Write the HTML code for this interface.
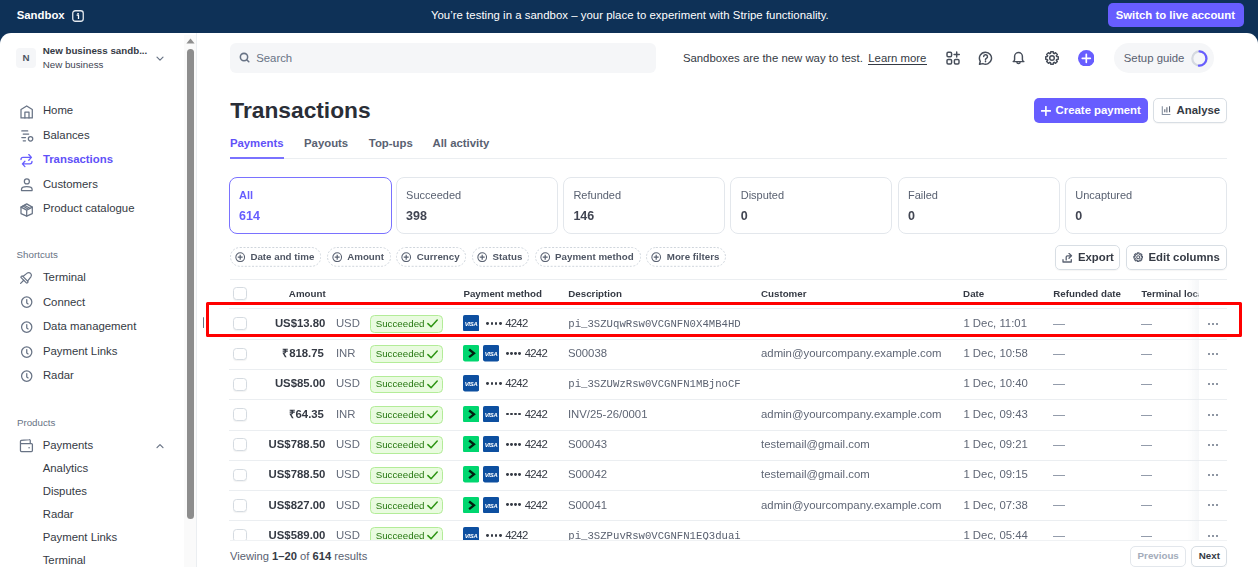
<!DOCTYPE html>
<html><head><meta charset="utf-8"><title>Transactions</title>
<style>
html,body{margin:0;padding:0;width:1258px;height:567px;overflow:hidden;background:#fff}
body{position:relative;font-family:"Liberation Sans",sans-serif}
.a{position:absolute;display:block}
.t{position:absolute;white-space:nowrap;display:block}
.gs{position:absolute;left:0;top:0;width:1258px;height:567px;will-change:transform}
</style></head><body>
<div class="a" style="left:0px;top:0px;width:1258px;height:567px;background:#0e3157"></div>
<span class="t" style="left:16.70px;top:10.02px;font-size:11.375px;line-height:11.375px;font-weight:700;color:#ffffff;font-family:'Liberation Sans',sans-serif;">Sandbox</span>
<svg class="a" style="left:72px;top:10px;" width="12" height="12" viewBox="0 0 12 12" fill="none"><rect x="0.75" y="0.75" width="10.5" height="10.5" rx="2.5" stroke="#e3e8ee" stroke-width="1.3"/><rect x="5.3" y="3" width="1.5" height="1.4" fill="#fff"/><path d="M4.6 5.2h1.9v3.9" stroke="#fff" stroke-width="1.3"/></svg>
<span class="t" style="left:430.90px;top:10.02px;font-size:11.375px;line-height:11.375px;font-weight:400;color:#ffffff;font-family:'Liberation Sans',sans-serif;letter-spacing:0.04px">You’re testing in a sandbox – your place to experiment with Stripe functionality.</span>
<div class="a" style="left:1108.4px;top:3.2px;width:135.5px;height:24.3px;background:#675dff;border-radius:5px"></div>
<span class="t" style="left:1115.70px;top:10.02px;font-size:11.375px;line-height:11.375px;font-weight:700;color:#ffffff;font-family:'Liberation Sans',sans-serif;">Switch to live account</span>
<div class="a" style="left:0px;top:33px;width:1258px;height:534px;background:#fff;border-radius:11px 11px 0 0"></div>
<div class="a" style="left:196px;top:33px;width:1px;height:534px;background:#ebeef1"></div>
<div class="a" style="left:16px;top:48px;width:20px;height:20px;background:#f5f6f8;border-radius:4px"></div>
<span class="t" style="left:22.50px;top:53.04px;font-size:9.75px;line-height:9.75px;font-weight:700;color:#4f5664;font-family:'Liberation Sans',sans-serif;">N</span>
<span class="t" style="left:42.70px;top:46.04px;font-size:9.75px;line-height:9.75px;font-weight:700;color:#353a44;font-family:'Liberation Sans',sans-serif;">New business sandb...</span>
<span class="t" style="left:42.70px;top:60.04px;font-size:9.75px;line-height:9.75px;font-weight:400;color:#414552;font-family:'Liberation Sans',sans-serif;">New business</span>
<svg class="a" style="left:156px;top:56px;" width="8" height="6" viewBox="0 0 8 6" fill="none"><path d="M1 1.2l3 3 3-3" stroke="#687385" stroke-width="1.2" stroke-linecap="round" stroke-linejoin="round"/></svg>
<span class="t" style="left:42.90px;top:105.02px;font-size:11.375px;line-height:11.375px;font-weight:400;color:#353a44;font-family:'Liberation Sans',sans-serif;">Home</span>
<span class="t" style="left:42.90px;top:130.02px;font-size:11.375px;line-height:11.375px;font-weight:400;color:#353a44;font-family:'Liberation Sans',sans-serif;">Balances</span>
<span class="t" style="left:42.90px;top:154.02px;font-size:11.375px;line-height:11.375px;font-weight:700;color:#5f51f8;font-family:'Liberation Sans',sans-serif;">Transactions</span>
<span class="t" style="left:42.90px;top:179.02px;font-size:11.375px;line-height:11.375px;font-weight:400;color:#353a44;font-family:'Liberation Sans',sans-serif;">Customers</span>
<span class="t" style="left:42.90px;top:203.02px;font-size:11.375px;line-height:11.375px;font-weight:400;color:#353a44;font-family:'Liberation Sans',sans-serif;">Product catalogue</span>
<svg class="a" style="left:19.5px;top:104.5px;" width="14" height="14" viewBox="0 0 14 14" fill="none"><path d="M1 12.9V4.6L6.7 0.9l5.6 3.7v8.3z" stroke="#687385" stroke-width="1.25" stroke-linecap="round" stroke-linejoin="round"/><path d="M4.9 12.9V7h4.1v5.9" stroke="#687385" stroke-width="1.25" stroke-linecap="round" stroke-linejoin="round"/></svg>
<svg class="a" style="left:19.5px;top:129px;" width="14" height="14" viewBox="0 0 14 14" fill="none"><path d="M1.8 1.9h5.9M3.2 5h5.5M1.8 8.5h3.7M3.2 11.8h2.3" stroke="#687385" stroke-width="1.25" stroke-linecap="round" stroke-linejoin="round"/><circle cx="10.55" cy="9.85" r="2.2" stroke="#687385" stroke-width="1.25" stroke-linecap="round" stroke-linejoin="round"/></svg>
<svg class="a" style="left:19.5px;top:154px;" width="14" height="14" viewBox="0 0 14 14" fill="none"><path d="M1 5.5Q1 3.4 3 3.4H11.2M8.8 0.5l2.6 2.9-2.6 2.8M12 7.3Q12 9.9 10 9.9H2.6M4.9 7.3L2.4 9.9l2.5 2.7" stroke="#675dff" stroke-width="1.3" stroke-linecap="round" stroke-linejoin="round"/></svg>
<svg class="a" style="left:19.5px;top:178px;" width="14" height="14" viewBox="0 0 14 14" fill="none"><circle cx="6.85" cy="3.4" r="2.5" stroke="#687385" stroke-width="1.25" stroke-linecap="round" stroke-linejoin="round"/><path d="M1.5 12.55v-1.3c0-1.7 1.4-2.7 5.3-2.7s5.3 1 5.3 2.7v1.3z" stroke="#687385" stroke-width="1.25" stroke-linecap="round" stroke-linejoin="round"/></svg>
<svg class="a" style="left:19.5px;top:202.5px;" width="14" height="14" viewBox="0 0 14 14" fill="none"><path d="M6.7 0.9l5.6 3.2v6.5l-5.6 2.5L1 10.6V4.1z" stroke="#687385" stroke-width="1.25" stroke-linecap="round" stroke-linejoin="round"/><path d="M1 4.1l5.7 3 5.6-3M6.7 7.1v6M2.9 3l5.5 3.2M4.4 2.2l5.5 3.1" stroke="#687385" stroke-width="1.25" stroke-linecap="round" stroke-linejoin="round"/></svg>
<span class="t" style="left:16.60px;top:250.04px;font-size:9.75px;line-height:9.75px;font-weight:400;color:#687385;font-family:'Liberation Sans',sans-serif;">Shortcuts</span>
<span class="t" style="left:42.90px;top:272.02px;font-size:11.375px;line-height:11.375px;font-weight:400;color:#353a44;font-family:'Liberation Sans',sans-serif;">Terminal</span>
<span class="t" style="left:42.90px;top:297.02px;font-size:11.375px;line-height:11.375px;font-weight:400;color:#353a44;font-family:'Liberation Sans',sans-serif;">Connect</span>
<span class="t" style="left:42.90px;top:321.02px;font-size:11.375px;line-height:11.375px;font-weight:400;color:#353a44;font-family:'Liberation Sans',sans-serif;">Data management</span>
<span class="t" style="left:42.90px;top:346.02px;font-size:11.375px;line-height:11.375px;font-weight:400;color:#353a44;font-family:'Liberation Sans',sans-serif;">Payment Links</span>
<span class="t" style="left:42.90px;top:370.02px;font-size:11.375px;line-height:11.375px;font-weight:400;color:#353a44;font-family:'Liberation Sans',sans-serif;">Radar</span>
<svg class="a" style="left:16.05px;top:268.35px;" width="20" height="20" viewBox="0 0 20 20" fill="none"><g transform="rotate(45 10 10)"><path d="M10 17.6V13.2" stroke="#687385" stroke-width="1.25" stroke-linecap="round" stroke-linejoin="round"/><rect x="5.6" y="11.1" width="8.8" height="2.1" rx=".7" stroke="#687385" stroke-width="1.25" stroke-linecap="round" stroke-linejoin="round"/><path d="M6.7 11.1l.7-5.4c.2-1.3 1.3-2.2 2.6-2.2s2.4.9 2.6 2.2l.7 5.4" stroke="#687385" stroke-width="1.25" stroke-linecap="round" stroke-linejoin="round"/></g></svg>
<svg class="a" style="left:19.5px;top:295.40000000000003px;" width="14" height="14" viewBox="0 0 14 14" fill="none"><circle cx="6.7" cy="7.1" r="5.15" stroke="#687385" stroke-width="1.25" stroke-linecap="round" stroke-linejoin="round"/><path d="M6.75 4.5V7.9l1.35 1" stroke="#687385" stroke-width="1.25" stroke-linecap="round" stroke-linejoin="round"/></svg>
<svg class="a" style="left:19.5px;top:319.8px;" width="14" height="14" viewBox="0 0 14 14" fill="none"><circle cx="6.7" cy="7.1" r="5.15" stroke="#687385" stroke-width="1.25" stroke-linecap="round" stroke-linejoin="round"/><path d="M6.75 4.5V7.9l1.35 1" stroke="#687385" stroke-width="1.25" stroke-linecap="round" stroke-linejoin="round"/></svg>
<svg class="a" style="left:19.5px;top:344.5px;" width="14" height="14" viewBox="0 0 14 14" fill="none"><circle cx="6.7" cy="7.1" r="5.15" stroke="#687385" stroke-width="1.25" stroke-linecap="round" stroke-linejoin="round"/><path d="M6.75 4.5V7.9l1.35 1" stroke="#687385" stroke-width="1.25" stroke-linecap="round" stroke-linejoin="round"/></svg>
<svg class="a" style="left:19.5px;top:369.0px;" width="14" height="14" viewBox="0 0 14 14" fill="none"><circle cx="6.7" cy="7.1" r="5.15" stroke="#687385" stroke-width="1.25" stroke-linecap="round" stroke-linejoin="round"/><path d="M6.75 4.5V7.9l1.35 1" stroke="#687385" stroke-width="1.25" stroke-linecap="round" stroke-linejoin="round"/></svg>
<span class="t" style="left:16.90px;top:418.04px;font-size:9.75px;line-height:9.75px;font-weight:400;color:#687385;font-family:'Liberation Sans',sans-serif;">Products</span>
<span class="t" style="left:42.70px;top:440.02px;font-size:11.375px;line-height:11.375px;font-weight:400;color:#353a44;font-family:'Liberation Sans',sans-serif;">Payments</span>
<svg class="a" style="left:19px;top:438px;" width="15" height="15" viewBox="0 0 15 15" fill="none"><path d="M1.45 5.6H12.4a1 1 0 0 1 1 1v5.95a1 1 0 0 1-1 1H2.45a1 1 0 0 1-1-1V3.4c0-.5.35-.9.85-1L10.3 1.7c.5-.1.95.3.95.8v3.1" stroke="#687385" stroke-width="1.25" stroke-linecap="round" stroke-linejoin="round"/><circle cx="10.1" cy="9.7" r=".8" fill="#687385"/></svg>
<svg class="a" style="left:156px;top:443px;" width="8" height="6" viewBox="0 0 8 6" fill="none"><path d="M1 4.6l3-3 3 3" stroke="#687385" stroke-width="1.2" stroke-linecap="round" stroke-linejoin="round"/></svg>
<span class="t" style="left:42.70px;top:463.02px;font-size:11.375px;line-height:11.375px;font-weight:400;color:#353a44;font-family:'Liberation Sans',sans-serif;">Analytics</span>
<span class="t" style="left:42.70px;top:486.02px;font-size:11.375px;line-height:11.375px;font-weight:400;color:#353a44;font-family:'Liberation Sans',sans-serif;">Disputes</span>
<span class="t" style="left:42.70px;top:509.02px;font-size:11.375px;line-height:11.375px;font-weight:400;color:#353a44;font-family:'Liberation Sans',sans-serif;">Radar</span>
<span class="t" style="left:42.70px;top:532.02px;font-size:11.375px;line-height:11.375px;font-weight:400;color:#353a44;font-family:'Liberation Sans',sans-serif;">Payment Links</span>
<span class="t" style="left:42.70px;top:555.02px;font-size:11.375px;line-height:11.375px;font-weight:400;color:#353a44;font-family:'Liberation Sans',sans-serif;">Terminal</span>
<div class="a" style="left:184.4px;top:35.3px;width:11.8px;height:531.7px;background:#fafafa"></div>
<svg class="a" style="left:186px;top:38px;" width="9" height="6" viewBox="0 0 9 6" fill="none"><path d="M4.5 0.6L8.6 5.4H0.4z" fill="#8f8f8f"/></svg>
<div class="a" style="left:187px;top:48.5px;width:7px;height:470.5px;background:#8d8d8d;border-radius:3.5px"></div>
<div class="a" style="left:229.5px;top:42.9px;width:426.5px;height:30px;background:#f5f6f8;border-radius:6px"></div>
<svg class="a" style="left:238.5px;top:51.5px;" width="12" height="12" viewBox="0 0 12 12" fill="none"><circle cx="5" cy="5" r="3.65" stroke="#687385" stroke-width="1.55"/><path d="M7.7 7.7l2.1 2.1" stroke="#687385" stroke-width="1.55" stroke-linecap="round"/></svg>
<span class="t" style="left:256.20px;top:53.02px;font-size:11.375px;line-height:11.375px;font-weight:400;color:#687385;font-family:'Liberation Sans',sans-serif;">Search</span>
<span class="t" style="left:682.90px;top:53.02px;font-size:11.375px;line-height:11.375px;font-weight:400;color:#353a44;font-family:'Liberation Sans',sans-serif;">Sandboxes are the new way to test.</span>
<span class="t" style="left:868.30px;top:53.02px;font-size:11.375px;line-height:11.375px;font-weight:400;color:#353a44;font-family:'Liberation Sans',sans-serif;">Learn more</span>
<div class="a" style="left:868px;top:64px;width:58.9px;height:1.2px;background:#353a44"></div>
<svg class="a" style="left:945.5px;top:51.4px;" width="15" height="14" viewBox="0 0 15 14" fill="none"><rect x="1" y="1.2" width="4.6" height="4.6" rx="1.2" stroke="#474e5a" stroke-width="1.45" stroke-linecap="round" stroke-linejoin="round"/><rect x="1" y="8.4" width="4.6" height="4.6" rx="1.2" stroke="#474e5a" stroke-width="1.45" stroke-linecap="round" stroke-linejoin="round"/><rect x="8.4" y="8.4" width="4.6" height="4.6" rx="1.2" stroke="#474e5a" stroke-width="1.45" stroke-linecap="round" stroke-linejoin="round"/><path d="M10.7 0.9v5.2M8.1 3.5h5.2" stroke="#474e5a" stroke-width="1.45" stroke-linecap="round" stroke-linejoin="round"/></svg>
<svg class="a" style="left:978px;top:50.9px;" width="15" height="14.5" viewBox="0 0 15 14.5" fill="none"><path d="M7.5 1.2a6 6 0 1 1-2.6 11.4L1.5 13.3l.8-3A6 6 0 0 1 7.5 1.2z" stroke="#474e5a" stroke-width="1.45" stroke-linecap="round" stroke-linejoin="round"/><path d="M5.7 5.6a1.9 1.9 0 1 1 2.7 1.7c-.6.3-.9.7-.9 1.3v.3" stroke="#474e5a" stroke-width="1.45" stroke-linecap="round" stroke-linejoin="round"/><circle cx="7.5" cy="10.6" r=".8" fill="#474e5a"/></svg>
<svg class="a" style="left:1012px;top:51px;" width="13" height="14.5" viewBox="0 0 13 14.5" fill="none"><path d="M1.2 10.6c.9-.5 1.4-1.2 1.4-2.2V5.4a3.9 3.9 0 0 1 7.8 0v3c0 1 .5 1.7 1.4 2.2z" stroke="#474e5a" stroke-width="1.45" stroke-linecap="round" stroke-linejoin="round"/><path d="M4.9 10.9a1.6 1.6 0 0 0 3.2 0" stroke="#474e5a" stroke-width="1.45" stroke-linecap="round" stroke-linejoin="round"/></svg>
<svg class="a" style="left:1044.5px;top:51.3px;" width="14" height="14" viewBox="0 0 14 14" fill="none"><path d="M5.55 2.32 L5.73 0.73 L8.27 0.73 L8.45 2.32 L9.29 2.67 L10.54 1.67 L12.33 3.46 L11.33 4.71 L11.68 5.55 L13.27 5.73 L13.27 8.27 L11.68 8.45 L11.33 9.29 L12.33 10.54 L10.54 12.33 L9.29 11.33 L8.45 11.68 L8.27 13.27 L5.73 13.27 L5.55 11.68 L4.71 11.33 L3.46 12.33 L1.67 10.54 L2.67 9.29 L2.32 8.45 L0.73 8.27 L0.73 5.73 L2.32 5.55 L2.67 4.71 L1.67 3.46 L3.46 1.67 L4.71 2.67Z" stroke="#474e5a" stroke-width="1.45" stroke-linecap="round" stroke-linejoin="round"/><circle cx="7" cy="7" r="2.3" stroke="#474e5a" stroke-width="1.45" stroke-linecap="round" stroke-linejoin="round"/></svg>
<svg class="a" style="left:1077.5px;top:49.8px;" width="16.6" height="16.6" viewBox="0 0 16.6 16.6" fill="none"><circle cx="8.3" cy="8.3" r="8.3" fill="#675dff"/><path d="M8.3 4.3v8M4.3 8.3h8" stroke="#fff" stroke-width="1.7" stroke-linecap="round"/></svg>
<div class="a" style="left:1113.8px;top:43.4px;width:100px;height:29.4px;background:#f5f6f8;border-radius:15px"></div>
<span class="t" style="left:1123.80px;top:53.02px;font-size:11.375px;line-height:11.375px;font-weight:400;color:#596171;font-family:'Liberation Sans',sans-serif;">Setup guide</span>
<svg class="a" style="left:1191px;top:50.3px;" width="17" height="17" viewBox="0 0 17 17" fill="none"><circle cx="8.5" cy="8.5" r="7.2" stroke="#d5d9e0" stroke-width="2.2"/><path d="M8.5 1.3a7.2 7.2 0 0 1 -.6 14.4" stroke="#675dff" stroke-width="2.2" stroke-linecap="round"/></svg>
<span class="t" style="left:230.30px;top:99.04px;font-size:22.75px;line-height:22.75px;font-weight:700;color:#2a2e37;font-family:'Liberation Sans',sans-serif;">Transactions</span>
<div class="a" style="left:1033.7px;top:98px;width:114.8px;height:24.9px;background:#675dff;border-radius:5px"></div>
<svg class="a" style="left:1041px;top:105.6px;" width="10" height="10" viewBox="0 0 10 10" fill="none"><path d="M4.9 0.6v8.8M0.6 4.9h8.8" stroke="#fff" stroke-width="1.6" stroke-linecap="round"/></svg>
<span class="t" style="left:1055.60px;top:105.02px;font-size:11.375px;line-height:11.375px;font-weight:700;color:#ffffff;font-family:'Liberation Sans',sans-serif;">Create payment</span>
<div class="a" style="left:1153.4px;top:97.8px;width:73.6px;height:24.8px;box-sizing:border-box;border:1px solid #d8dee4;border-radius:5px;background:#fff;box-shadow:0 1px 1px rgba(0,0,0,.04)"></div>
<svg class="a" style="left:1160.5px;top:106px;" width="10" height="10" viewBox="0 0 10 10" fill="none"><path d="M1.3 0.2V8.5H9.4" stroke="#8792a2" stroke-width="1.1"/><path d="M3.8 3.3V6.2M5.9 1.2V6.6M8.55 0.2V6.3" stroke="#596171" stroke-width="1.05"/></svg>
<span class="t" style="left:1176.60px;top:105.02px;font-size:11.375px;line-height:11.375px;font-weight:700;color:#353a44;font-family:'Liberation Sans',sans-serif;">Analyse</span>
<div class="a" style="left:229.5px;top:158px;width:997.5px;height:1px;background:#ebeef1"></div>
<div class="a" style="left:229.5px;top:157px;width:54.6px;height:2px;background:#7a72ff"></div>
<span class="t" style="left:229.90px;top:138.02px;font-size:11.375px;line-height:11.375px;font-weight:700;color:#5f51f8;font-family:'Liberation Sans',sans-serif;">Payments</span>
<span class="t" style="left:304.00px;top:138.02px;font-size:11.375px;line-height:11.375px;font-weight:700;color:#596171;font-family:'Liberation Sans',sans-serif;">Payouts</span>
<span class="t" style="left:368.80px;top:138.02px;font-size:11.375px;line-height:11.375px;font-weight:700;color:#596171;font-family:'Liberation Sans',sans-serif;">Top-ups</span>
<span class="t" style="left:432.50px;top:138.02px;font-size:11.375px;line-height:11.375px;font-weight:700;color:#596171;font-family:'Liberation Sans',sans-serif;">All activity</span>
<div class="gs"><div class="a" style="left:228.5px;top:177.2px;width:163px;height:56.4px;box-sizing:border-box;border:1.8px solid #7a72ff;border-radius:8px"></div>
<span class="t" style="left:239.10px;top:190.04px;font-size:11px;line-height:11px;font-weight:700;color:#675dff;font-family:'Liberation Sans',sans-serif;">All</span>
<span class="t" style="left:239.10px;top:210.02px;font-size:12.5px;line-height:12.5px;font-weight:700;color:#675dff;font-family:'Liberation Sans',sans-serif;">614</span>
<div class="a" style="left:395.8px;top:177.2px;width:162px;height:56.4px;box-sizing:border-box;border:1px solid #e3e7ec;border-radius:8px"></div>
<span class="t" style="left:406.10px;top:190.04px;font-size:11px;line-height:11px;font-weight:400;color:#596171;font-family:'Liberation Sans',sans-serif;">Succeeded</span>
<span class="t" style="left:406.10px;top:210.02px;font-size:12.5px;line-height:12.5px;font-weight:700;color:#414552;font-family:'Liberation Sans',sans-serif;">398</span>
<div class="a" style="left:563.1px;top:177.2px;width:162px;height:56.4px;box-sizing:border-box;border:1px solid #e3e7ec;border-radius:8px"></div>
<span class="t" style="left:573.40px;top:190.04px;font-size:11px;line-height:11px;font-weight:400;color:#596171;font-family:'Liberation Sans',sans-serif;">Refunded</span>
<span class="t" style="left:573.40px;top:210.02px;font-size:12.5px;line-height:12.5px;font-weight:700;color:#414552;font-family:'Liberation Sans',sans-serif;">146</span>
<div class="a" style="left:730.4000000000001px;top:177.2px;width:162px;height:56.4px;box-sizing:border-box;border:1px solid #e3e7ec;border-radius:8px"></div>
<span class="t" style="left:740.70px;top:190.04px;font-size:11px;line-height:11px;font-weight:400;color:#596171;font-family:'Liberation Sans',sans-serif;">Disputed</span>
<span class="t" style="left:740.70px;top:210.02px;font-size:12.5px;line-height:12.5px;font-weight:700;color:#414552;font-family:'Liberation Sans',sans-serif;">0</span>
<div class="a" style="left:897.7px;top:177.2px;width:162px;height:56.4px;box-sizing:border-box;border:1px solid #e3e7ec;border-radius:8px"></div>
<span class="t" style="left:908.00px;top:190.04px;font-size:11px;line-height:11px;font-weight:400;color:#596171;font-family:'Liberation Sans',sans-serif;">Failed</span>
<span class="t" style="left:908.00px;top:210.02px;font-size:12.5px;line-height:12.5px;font-weight:700;color:#414552;font-family:'Liberation Sans',sans-serif;">0</span>
<div class="a" style="left:1065.0px;top:177.2px;width:162px;height:56.4px;box-sizing:border-box;border:1px solid #e3e7ec;border-radius:8px"></div>
<span class="t" style="left:1075.30px;top:190.04px;font-size:11px;line-height:11px;font-weight:400;color:#596171;font-family:'Liberation Sans',sans-serif;">Uncaptured</span>
<span class="t" style="left:1075.30px;top:210.02px;font-size:12.5px;line-height:12.5px;font-weight:700;color:#414552;font-family:'Liberation Sans',sans-serif;">0</span></div>
<svg class="a" style="left:230px;top:247px;" width="91.39999999999998" height="19.8" viewBox="0 0 91.39999999999998 19.8" fill="none"><rect x="0.5" y="0.5" width="90.4" height="18.8" rx="9.4" stroke="#cfd5dc" stroke-width="1" stroke-dasharray="2 1.6"/></svg>
<svg class="a" style="left:235.0px;top:252.05px;" width="10.4" height="10.4" viewBox="0 0 10.4 10.4" fill="none"><circle cx="5.2" cy="5.2" r="4.35" stroke="#596171" stroke-width="1.05"/><path d="M5.2 2.75v4.9M2.75 5.2h4.9" stroke="#596171" stroke-width="1.2"/></svg>
<span class="t" style="left:250.40px;top:252.04px;font-size:9.75px;line-height:9.75px;font-weight:700;color:#4f5664;font-family:'Liberation Sans',sans-serif;">Date and time</span>
<svg class="a" style="left:326.8px;top:247px;" width="64.19999999999999" height="19.8" viewBox="0 0 64.19999999999999 19.8" fill="none"><rect x="0.5" y="0.5" width="63.2" height="18.8" rx="9.4" stroke="#cfd5dc" stroke-width="1" stroke-dasharray="2 1.6"/></svg>
<svg class="a" style="left:331.8px;top:252.05px;" width="10.4" height="10.4" viewBox="0 0 10.4 10.4" fill="none"><circle cx="5.2" cy="5.2" r="4.35" stroke="#596171" stroke-width="1.05"/><path d="M5.2 2.75v4.9M2.75 5.2h4.9" stroke="#596171" stroke-width="1.2"/></svg>
<span class="t" style="left:347.20px;top:252.04px;font-size:9.75px;line-height:9.75px;font-weight:700;color:#4f5664;font-family:'Liberation Sans',sans-serif;">Amount</span>
<svg class="a" style="left:396.3px;top:247px;" width="70.19999999999999" height="19.8" viewBox="0 0 70.19999999999999 19.8" fill="none"><rect x="0.5" y="0.5" width="69.2" height="18.8" rx="9.4" stroke="#cfd5dc" stroke-width="1" stroke-dasharray="2 1.6"/></svg>
<svg class="a" style="left:401.40000000000003px;top:252.05px;" width="10.4" height="10.4" viewBox="0 0 10.4 10.4" fill="none"><circle cx="5.2" cy="5.2" r="4.35" stroke="#596171" stroke-width="1.05"/><path d="M5.2 2.75v4.9M2.75 5.2h4.9" stroke="#596171" stroke-width="1.2"/></svg>
<span class="t" style="left:416.80px;top:252.04px;font-size:9.75px;line-height:9.75px;font-weight:700;color:#4f5664;font-family:'Liberation Sans',sans-serif;">Currency</span>
<svg class="a" style="left:471.9px;top:247px;" width="57.10000000000002" height="19.8" viewBox="0 0 57.10000000000002 19.8" fill="none"><rect x="0.5" y="0.5" width="56.1" height="18.8" rx="9.4" stroke="#cfd5dc" stroke-width="1" stroke-dasharray="2 1.6"/></svg>
<svg class="a" style="left:477.1px;top:252.05px;" width="10.4" height="10.4" viewBox="0 0 10.4 10.4" fill="none"><circle cx="5.2" cy="5.2" r="4.35" stroke="#596171" stroke-width="1.05"/><path d="M5.2 2.75v4.9M2.75 5.2h4.9" stroke="#596171" stroke-width="1.2"/></svg>
<span class="t" style="left:492.50px;top:252.04px;font-size:9.75px;line-height:9.75px;font-weight:700;color:#4f5664;font-family:'Liberation Sans',sans-serif;">Status</span>
<svg class="a" style="left:534.8px;top:247px;" width="106.20000000000005" height="19.8" viewBox="0 0 106.20000000000005 19.8" fill="none"><rect x="0.5" y="0.5" width="105.2" height="18.8" rx="9.4" stroke="#cfd5dc" stroke-width="1" stroke-dasharray="2 1.6"/></svg>
<svg class="a" style="left:539.7px;top:252.05px;" width="10.4" height="10.4" viewBox="0 0 10.4 10.4" fill="none"><circle cx="5.2" cy="5.2" r="4.35" stroke="#596171" stroke-width="1.05"/><path d="M5.2 2.75v4.9M2.75 5.2h4.9" stroke="#596171" stroke-width="1.2"/></svg>
<span class="t" style="left:555.10px;top:252.04px;font-size:9.75px;line-height:9.75px;font-weight:700;color:#4f5664;font-family:'Liberation Sans',sans-serif;">Payment method</span>
<svg class="a" style="left:646.4px;top:247px;" width="80.0" height="19.8" viewBox="0 0 80.0 19.8" fill="none"><rect x="0.5" y="0.5" width="79.0" height="18.8" rx="9.4" stroke="#cfd5dc" stroke-width="1" stroke-dasharray="2 1.6"/></svg>
<svg class="a" style="left:651.4px;top:252.05px;" width="10.4" height="10.4" viewBox="0 0 10.4 10.4" fill="none"><circle cx="5.2" cy="5.2" r="4.35" stroke="#596171" stroke-width="1.05"/><path d="M5.2 2.75v4.9M2.75 5.2h4.9" stroke="#596171" stroke-width="1.2"/></svg>
<span class="t" style="left:666.80px;top:252.04px;font-size:9.75px;line-height:9.75px;font-weight:700;color:#4f5664;font-family:'Liberation Sans',sans-serif;">More filters</span>
<div class="a" style="left:1055.3px;top:245.3px;width:65.2px;height:24.7px;box-sizing:border-box;border:1px solid #d8dee4;border-radius:5px;box-shadow:0 1px 1px rgba(0,0,0,.04)"></div>
<svg class="a" style="left:1062.3px;top:252.6px;" width="11" height="10.5" viewBox="0 0 11 10.5" fill="none"><path d="M1 6.7V9h8.3V6.7M4.2 6.9V4a1.2 1.2 0 0 1 1.2-1.2H9.2M7 .4l2.5 2.4L7 5.2" stroke="#596171" stroke-width="1.3" stroke-linecap="round" stroke-linejoin="round"/></svg>
<span class="t" style="left:1077.90px;top:252.02px;font-size:11.375px;line-height:11.375px;font-weight:700;color:#353a44;font-family:'Liberation Sans',sans-serif;">Export</span>
<div class="a" style="left:1126.3px;top:245.3px;width:100.3px;height:24.7px;box-sizing:border-box;border:1px solid #d8dee4;border-radius:5px;box-shadow:0 1px 1px rgba(0,0,0,.04)"></div>
<svg class="a" style="left:1132.95px;top:251.9px;" width="10.4" height="10.4" viewBox="0 0 10.4 10.4" fill="none"><path d="M4.35 2.01 L4.37 0.88 L6.03 0.88 L6.05 2.01 L6.86 2.35 L7.67 1.56 L8.84 2.73 L8.05 3.54 L8.39 4.35 L9.52 4.37 L9.52 6.03 L8.39 6.05 L8.05 6.86 L8.84 7.67 L7.67 8.84 L6.86 8.05 L6.05 8.39 L6.03 9.52 L4.37 9.52 L4.35 8.39 L3.54 8.05 L2.73 8.84 L1.56 7.67 L2.35 6.86 L2.01 6.05 L0.88 6.03 L0.88 4.37 L2.01 4.35 L2.35 3.54 L1.56 2.73 L2.73 1.56 L3.54 2.35Z" stroke="#596171" stroke-width="1.2" stroke-linejoin="round"/><circle cx="5.2" cy="5.2" r="1.5" stroke="#596171" stroke-width="1.1"/></svg>
<span class="t" style="left:1148.50px;top:252.02px;font-size:11.375px;line-height:11.375px;font-weight:700;color:#353a44;font-family:'Liberation Sans',sans-serif;">Edit columns</span>
<div class="a" style="left:230px;top:279.3px;width:997px;height:1px;background:#ebeef1"></div>
<div class="a" style="left:233.3px;top:287.2px;width:13.3px;height:12.8px;box-sizing:border-box;border:1px solid #d5dbe1;border-radius:3.5px;background:#fff;box-shadow:0 1px 1px rgba(0,0,0,.05)"></div>
<span class="t" style="left:288.87px;top:289.04px;font-size:9.75px;line-height:9.75px;font-weight:700;color:#353a44;font-family:'Liberation Sans',sans-serif;">Amount</span>
<span class="t" style="left:463.40px;top:289.04px;font-size:9.75px;line-height:9.75px;font-weight:700;color:#353a44;font-family:'Liberation Sans',sans-serif;">Payment method</span>
<span class="t" style="left:568.30px;top:289.04px;font-size:9.75px;line-height:9.75px;font-weight:700;color:#353a44;font-family:'Liberation Sans',sans-serif;">Description</span>
<span class="t" style="left:761.00px;top:289.04px;font-size:9.75px;line-height:9.75px;font-weight:700;color:#353a44;font-family:'Liberation Sans',sans-serif;">Customer</span>
<span class="t" style="left:963.10px;top:289.04px;font-size:9.75px;line-height:9.75px;font-weight:700;color:#353a44;font-family:'Liberation Sans',sans-serif;">Date</span>
<span class="t" style="left:1053.30px;top:289.04px;font-size:9.75px;line-height:9.75px;font-weight:700;color:#353a44;font-family:'Liberation Sans',sans-serif;">Refunded date</span>
<span class="t" style="left:1141.30px;top:289.04px;font-size:9.75px;line-height:9.75px;font-weight:700;color:#353a44;font-family:'Liberation Sans',sans-serif;clip-path:inset(0 calc(100% - 58.5px) 0 0)">Terminal location</span>
<div class="gs"><div class="a" style="left:229.4px;top:308.4px;width:997px;height:1px;background:#ebeef1"></div>
<div class="a" style="left:233.3px;top:317.24499999999995px;width:13.3px;height:12.8px;box-sizing:border-box;border:1px solid #d5dbe1;border-radius:3.5px;background:#fff;box-shadow:0 1px 1px rgba(0,0,0,.05)"></div>
<span class="t" style="left:274.90px;top:318.02px;font-size:11.375px;line-height:11.375px;font-weight:700;color:#353a44;font-family:'Liberation Sans',sans-serif;">US$13.80</span>
<span class="t" style="left:335.90px;top:318.02px;font-size:11.375px;line-height:11.375px;font-weight:400;color:#646b7a;font-family:'Liberation Sans',sans-serif;">USD</span>
<div class="a" style="left:369.9px;top:315.145px;width:73.6px;height:17.6px;box-sizing:border-box;background:#e9fbdf;border:1px solid #b3ec98;border-radius:4.5px"></div>
<span class="t" style="left:375.70px;top:319.04px;font-size:9.75px;line-height:9.75px;font-weight:400;color:#25770f;font-family:'Liberation Sans',sans-serif;">Succeeded</span>
<svg class="a" style="left:427.2px;top:319.24499999999995px;" width="11" height="9" viewBox="0 0 11 9" fill="none"><path d="M0.9 4.6l3.2 3.2L10.2 1" stroke="#2e9413" stroke-width="1.5" stroke-linecap="round" stroke-linejoin="round"/></svg>
<svg class="a" style="left:462.9px;top:314.84499999999997px;" width="16.2" height="16.4" viewBox="0 0 16.2 16.4" fill="none"><rect width="16.2" height="16.4" rx="1.8" fill="#0d4fa0"/><text x="8.1" y="10.6" text-anchor="middle" font-family="Liberation Sans" font-weight="700" font-style="italic" font-size="5.9" letter-spacing="-0.2" fill="#fff">VISA</text></svg>
<div class="a" style="left:486.4px;top:321.69499999999994px;width:2.9px;height:2.9px;background:#353a44;border-radius:50%"></div>
<div class="a" style="left:490.5px;top:321.69499999999994px;width:2.9px;height:2.9px;background:#353a44;border-radius:50%"></div>
<div class="a" style="left:494.59999999999997px;top:321.69499999999994px;width:2.9px;height:2.9px;background:#353a44;border-radius:50%"></div>
<div class="a" style="left:498.7px;top:321.69499999999994px;width:2.9px;height:2.9px;background:#353a44;border-radius:50%"></div>
<span class="t" style="left:505.20px;top:318.02px;font-size:11.375px;line-height:11.375px;font-weight:400;color:#353a44;font-family:'Liberation Sans',sans-serif;letter-spacing:-0.75px">4242</span>
<span class="t" style="left:568.30px;top:319.04px;font-size:10.65px;line-height:10.65px;font-weight:400;color:#5a6170;font-family:'Liberation Mono',monospace;">pi_3SZUqwRsw0VCGNFN0X4MB4HD</span>
<span class="t" style="left:963.40px;top:318.02px;font-size:11.375px;line-height:11.375px;font-weight:400;color:#5f6675;font-family:'Liberation Sans',sans-serif;">1 Dec, 11:01</span>
<div class="a" style="left:1053.3px;top:323.74499999999995px;width:11.3px;height:1px;background:#939cab"></div>
<div class="a" style="left:1141.3px;top:323.74499999999995px;width:11.1px;height:1px;background:#939cab"></div>
<div class="a" style="left:229.4px;top:338.69px;width:997px;height:1px;background:#ebeef1"></div>
<div class="a" style="left:233.3px;top:347.53499999999997px;width:13.3px;height:12.8px;box-sizing:border-box;border:1px solid #d5dbe1;border-radius:3.5px;background:#fff;box-shadow:0 1px 1px rgba(0,0,0,.05)"></div>
<span class="t" style="left:282.17px;top:348.02px;font-size:11.375px;line-height:11.375px;font-weight:700;color:#353a44;font-family:'Liberation Sans',sans-serif;">₹818.75</span>
<span class="t" style="left:335.90px;top:348.02px;font-size:11.375px;line-height:11.375px;font-weight:400;color:#646b7a;font-family:'Liberation Sans',sans-serif;">INR</span>
<div class="a" style="left:369.9px;top:345.435px;width:73.6px;height:17.6px;box-sizing:border-box;background:#e9fbdf;border:1px solid #b3ec98;border-radius:4.5px"></div>
<span class="t" style="left:375.70px;top:349.04px;font-size:9.75px;line-height:9.75px;font-weight:400;color:#25770f;font-family:'Liberation Sans',sans-serif;">Succeeded</span>
<svg class="a" style="left:427.2px;top:349.53499999999997px;" width="11" height="9" viewBox="0 0 11 9" fill="none"><path d="M0.9 4.6l3.2 3.2L10.2 1" stroke="#2e9413" stroke-width="1.5" stroke-linecap="round" stroke-linejoin="round"/></svg>
<svg class="a" style="left:462.9px;top:345.135px;" width="16.3" height="16.4" viewBox="0 0 16.3 16.4" fill="none"><rect width="16.3" height="16.4" rx="1.8" fill="#00d66f"/><path d="M6.1 4.5l4.9 3.8-4.9 3.8" stroke="#011e0f" stroke-width="2.3" stroke-linejoin="miter"/></svg>
<svg class="a" style="left:482.8px;top:345.135px;" width="16.2" height="16.4" viewBox="0 0 16.2 16.4" fill="none"><rect width="16.2" height="16.4" rx="1.8" fill="#0d4fa0"/><text x="8.1" y="10.6" text-anchor="middle" font-family="Liberation Sans" font-weight="700" font-style="italic" font-size="5.9" letter-spacing="-0.2" fill="#fff">VISA</text></svg>
<div class="a" style="left:505.9px;top:351.98499999999996px;width:2.9px;height:2.9px;background:#353a44;border-radius:50%"></div>
<div class="a" style="left:510.0px;top:351.98499999999996px;width:2.9px;height:2.9px;background:#353a44;border-radius:50%"></div>
<div class="a" style="left:514.1px;top:351.98499999999996px;width:2.9px;height:2.9px;background:#353a44;border-radius:50%"></div>
<div class="a" style="left:518.1999999999999px;top:351.98499999999996px;width:2.9px;height:2.9px;background:#353a44;border-radius:50%"></div>
<span class="t" style="left:524.70px;top:348.02px;font-size:11.375px;line-height:11.375px;font-weight:400;color:#353a44;font-family:'Liberation Sans',sans-serif;letter-spacing:-0.75px">4242</span>
<span class="t" style="left:567.90px;top:348.02px;font-size:11.375px;line-height:11.375px;font-weight:400;color:#5f6675;font-family:'Liberation Sans',sans-serif;">S00038</span>
<span class="t" style="left:761.00px;top:348.02px;font-size:11.375px;line-height:11.375px;font-weight:400;color:#5f6675;font-family:'Liberation Sans',sans-serif;">admin@yourcompany.example.com</span>
<span class="t" style="left:963.40px;top:348.02px;font-size:11.375px;line-height:11.375px;font-weight:400;color:#5f6675;font-family:'Liberation Sans',sans-serif;">1 Dec, 10:58</span>
<div class="a" style="left:1053.3px;top:354.03499999999997px;width:11.3px;height:1px;background:#939cab"></div>
<div class="a" style="left:1141.3px;top:354.03499999999997px;width:11.1px;height:1px;background:#939cab"></div>
<div class="a" style="left:229.4px;top:368.97999999999996px;width:997px;height:1px;background:#ebeef1"></div>
<div class="a" style="left:233.3px;top:377.82499999999993px;width:13.3px;height:12.8px;box-sizing:border-box;border:1px solid #d5dbe1;border-radius:3.5px;background:#fff;box-shadow:0 1px 1px rgba(0,0,0,.05)"></div>
<span class="t" style="left:274.90px;top:378.02px;font-size:11.375px;line-height:11.375px;font-weight:700;color:#353a44;font-family:'Liberation Sans',sans-serif;">US$85.00</span>
<span class="t" style="left:335.90px;top:378.02px;font-size:11.375px;line-height:11.375px;font-weight:400;color:#646b7a;font-family:'Liberation Sans',sans-serif;">USD</span>
<div class="a" style="left:369.9px;top:375.72499999999997px;width:73.6px;height:17.6px;box-sizing:border-box;background:#e9fbdf;border:1px solid #b3ec98;border-radius:4.5px"></div>
<span class="t" style="left:375.70px;top:379.04px;font-size:9.75px;line-height:9.75px;font-weight:400;color:#25770f;font-family:'Liberation Sans',sans-serif;">Succeeded</span>
<svg class="a" style="left:427.2px;top:379.82499999999993px;" width="11" height="9" viewBox="0 0 11 9" fill="none"><path d="M0.9 4.6l3.2 3.2L10.2 1" stroke="#2e9413" stroke-width="1.5" stroke-linecap="round" stroke-linejoin="round"/></svg>
<svg class="a" style="left:462.9px;top:375.42499999999995px;" width="16.2" height="16.4" viewBox="0 0 16.2 16.4" fill="none"><rect width="16.2" height="16.4" rx="1.8" fill="#0d4fa0"/><text x="8.1" y="10.6" text-anchor="middle" font-family="Liberation Sans" font-weight="700" font-style="italic" font-size="5.9" letter-spacing="-0.2" fill="#fff">VISA</text></svg>
<div class="a" style="left:486.4px;top:382.2749999999999px;width:2.9px;height:2.9px;background:#353a44;border-radius:50%"></div>
<div class="a" style="left:490.5px;top:382.2749999999999px;width:2.9px;height:2.9px;background:#353a44;border-radius:50%"></div>
<div class="a" style="left:494.59999999999997px;top:382.2749999999999px;width:2.9px;height:2.9px;background:#353a44;border-radius:50%"></div>
<div class="a" style="left:498.7px;top:382.2749999999999px;width:2.9px;height:2.9px;background:#353a44;border-radius:50%"></div>
<span class="t" style="left:505.20px;top:378.02px;font-size:11.375px;line-height:11.375px;font-weight:400;color:#353a44;font-family:'Liberation Sans',sans-serif;letter-spacing:-0.75px">4242</span>
<span class="t" style="left:568.30px;top:379.04px;font-size:10.65px;line-height:10.65px;font-weight:400;color:#5a6170;font-family:'Liberation Mono',monospace;">pi_3SZUWzRsw0VCGNFN1MBjnoCF</span>
<span class="t" style="left:963.40px;top:378.02px;font-size:11.375px;line-height:11.375px;font-weight:400;color:#5f6675;font-family:'Liberation Sans',sans-serif;">1 Dec, 10:40</span>
<div class="a" style="left:1053.3px;top:384.32499999999993px;width:11.3px;height:1px;background:#939cab"></div>
<div class="a" style="left:1141.3px;top:384.32499999999993px;width:11.1px;height:1px;background:#939cab"></div>
<div class="a" style="left:229.4px;top:399.27px;width:997px;height:1px;background:#ebeef1"></div>
<div class="a" style="left:233.3px;top:408.11499999999995px;width:13.3px;height:12.8px;box-sizing:border-box;border:1px solid #d5dbe1;border-radius:3.5px;background:#fff;box-shadow:0 1px 1px rgba(0,0,0,.05)"></div>
<span class="t" style="left:288.51px;top:409.02px;font-size:11.375px;line-height:11.375px;font-weight:700;color:#353a44;font-family:'Liberation Sans',sans-serif;">₹64.35</span>
<span class="t" style="left:335.90px;top:409.02px;font-size:11.375px;line-height:11.375px;font-weight:400;color:#646b7a;font-family:'Liberation Sans',sans-serif;">INR</span>
<div class="a" style="left:369.9px;top:406.015px;width:73.6px;height:17.6px;box-sizing:border-box;background:#e9fbdf;border:1px solid #b3ec98;border-radius:4.5px"></div>
<span class="t" style="left:375.70px;top:410.04px;font-size:9.75px;line-height:9.75px;font-weight:400;color:#25770f;font-family:'Liberation Sans',sans-serif;">Succeeded</span>
<svg class="a" style="left:427.2px;top:410.11499999999995px;" width="11" height="9" viewBox="0 0 11 9" fill="none"><path d="M0.9 4.6l3.2 3.2L10.2 1" stroke="#2e9413" stroke-width="1.5" stroke-linecap="round" stroke-linejoin="round"/></svg>
<svg class="a" style="left:462.9px;top:405.715px;" width="16.3" height="16.4" viewBox="0 0 16.3 16.4" fill="none"><rect width="16.3" height="16.4" rx="1.8" fill="#00d66f"/><path d="M6.1 4.5l4.9 3.8-4.9 3.8" stroke="#011e0f" stroke-width="2.3" stroke-linejoin="miter"/></svg>
<svg class="a" style="left:482.8px;top:405.715px;" width="16.2" height="16.4" viewBox="0 0 16.2 16.4" fill="none"><rect width="16.2" height="16.4" rx="1.8" fill="#0d4fa0"/><text x="8.1" y="10.6" text-anchor="middle" font-family="Liberation Sans" font-weight="700" font-style="italic" font-size="5.9" letter-spacing="-0.2" fill="#fff">VISA</text></svg>
<div class="a" style="left:505.9px;top:412.56499999999994px;width:2.9px;height:2.9px;background:#353a44;border-radius:50%"></div>
<div class="a" style="left:510.0px;top:412.56499999999994px;width:2.9px;height:2.9px;background:#353a44;border-radius:50%"></div>
<div class="a" style="left:514.1px;top:412.56499999999994px;width:2.9px;height:2.9px;background:#353a44;border-radius:50%"></div>
<div class="a" style="left:518.1999999999999px;top:412.56499999999994px;width:2.9px;height:2.9px;background:#353a44;border-radius:50%"></div>
<span class="t" style="left:524.70px;top:409.02px;font-size:11.375px;line-height:11.375px;font-weight:400;color:#353a44;font-family:'Liberation Sans',sans-serif;letter-spacing:-0.75px">4242</span>
<span class="t" style="left:567.90px;top:409.02px;font-size:11.375px;line-height:11.375px;font-weight:400;color:#5f6675;font-family:'Liberation Sans',sans-serif;">INV/25-26/0001</span>
<span class="t" style="left:761.00px;top:409.02px;font-size:11.375px;line-height:11.375px;font-weight:400;color:#5f6675;font-family:'Liberation Sans',sans-serif;">admin@yourcompany.example.com</span>
<span class="t" style="left:963.40px;top:409.02px;font-size:11.375px;line-height:11.375px;font-weight:400;color:#5f6675;font-family:'Liberation Sans',sans-serif;">1 Dec, 09:43</span>
<div class="a" style="left:1053.3px;top:414.61499999999995px;width:11.3px;height:1px;background:#939cab"></div>
<div class="a" style="left:1141.3px;top:414.61499999999995px;width:11.1px;height:1px;background:#939cab"></div>
<div class="a" style="left:229.4px;top:429.55999999999995px;width:997px;height:1px;background:#ebeef1"></div>
<div class="a" style="left:233.3px;top:438.4049999999999px;width:13.3px;height:12.8px;box-sizing:border-box;border:1px solid #d5dbe1;border-radius:3.5px;background:#fff;box-shadow:0 1px 1px rgba(0,0,0,.05)"></div>
<span class="t" style="left:268.58px;top:439.02px;font-size:11.375px;line-height:11.375px;font-weight:700;color:#353a44;font-family:'Liberation Sans',sans-serif;">US$788.50</span>
<span class="t" style="left:335.90px;top:439.02px;font-size:11.375px;line-height:11.375px;font-weight:400;color:#646b7a;font-family:'Liberation Sans',sans-serif;">USD</span>
<div class="a" style="left:369.9px;top:436.30499999999995px;width:73.6px;height:17.6px;box-sizing:border-box;background:#e9fbdf;border:1px solid #b3ec98;border-radius:4.5px"></div>
<span class="t" style="left:375.70px;top:440.04px;font-size:9.75px;line-height:9.75px;font-weight:400;color:#25770f;font-family:'Liberation Sans',sans-serif;">Succeeded</span>
<svg class="a" style="left:427.2px;top:440.4049999999999px;" width="11" height="9" viewBox="0 0 11 9" fill="none"><path d="M0.9 4.6l3.2 3.2L10.2 1" stroke="#2e9413" stroke-width="1.5" stroke-linecap="round" stroke-linejoin="round"/></svg>
<svg class="a" style="left:462.9px;top:436.00499999999994px;" width="16.3" height="16.4" viewBox="0 0 16.3 16.4" fill="none"><rect width="16.3" height="16.4" rx="1.8" fill="#00d66f"/><path d="M6.1 4.5l4.9 3.8-4.9 3.8" stroke="#011e0f" stroke-width="2.3" stroke-linejoin="miter"/></svg>
<svg class="a" style="left:482.8px;top:436.00499999999994px;" width="16.2" height="16.4" viewBox="0 0 16.2 16.4" fill="none"><rect width="16.2" height="16.4" rx="1.8" fill="#0d4fa0"/><text x="8.1" y="10.6" text-anchor="middle" font-family="Liberation Sans" font-weight="700" font-style="italic" font-size="5.9" letter-spacing="-0.2" fill="#fff">VISA</text></svg>
<div class="a" style="left:505.9px;top:442.8549999999999px;width:2.9px;height:2.9px;background:#353a44;border-radius:50%"></div>
<div class="a" style="left:510.0px;top:442.8549999999999px;width:2.9px;height:2.9px;background:#353a44;border-radius:50%"></div>
<div class="a" style="left:514.1px;top:442.8549999999999px;width:2.9px;height:2.9px;background:#353a44;border-radius:50%"></div>
<div class="a" style="left:518.1999999999999px;top:442.8549999999999px;width:2.9px;height:2.9px;background:#353a44;border-radius:50%"></div>
<span class="t" style="left:524.70px;top:439.02px;font-size:11.375px;line-height:11.375px;font-weight:400;color:#353a44;font-family:'Liberation Sans',sans-serif;letter-spacing:-0.75px">4242</span>
<span class="t" style="left:567.90px;top:439.02px;font-size:11.375px;line-height:11.375px;font-weight:400;color:#5f6675;font-family:'Liberation Sans',sans-serif;">S00043</span>
<span class="t" style="left:761.00px;top:439.02px;font-size:11.375px;line-height:11.375px;font-weight:400;color:#5f6675;font-family:'Liberation Sans',sans-serif;">testemail@gmail.com</span>
<span class="t" style="left:963.40px;top:439.02px;font-size:11.375px;line-height:11.375px;font-weight:400;color:#5f6675;font-family:'Liberation Sans',sans-serif;">1 Dec, 09:21</span>
<div class="a" style="left:1053.3px;top:444.9049999999999px;width:11.3px;height:1px;background:#939cab"></div>
<div class="a" style="left:1141.3px;top:444.9049999999999px;width:11.1px;height:1px;background:#939cab"></div>
<div class="a" style="left:229.4px;top:459.84999999999997px;width:997px;height:1px;background:#ebeef1"></div>
<div class="a" style="left:233.3px;top:468.69499999999994px;width:13.3px;height:12.8px;box-sizing:border-box;border:1px solid #d5dbe1;border-radius:3.5px;background:#fff;box-shadow:0 1px 1px rgba(0,0,0,.05)"></div>
<span class="t" style="left:268.58px;top:469.02px;font-size:11.375px;line-height:11.375px;font-weight:700;color:#353a44;font-family:'Liberation Sans',sans-serif;">US$788.50</span>
<span class="t" style="left:335.90px;top:469.02px;font-size:11.375px;line-height:11.375px;font-weight:400;color:#646b7a;font-family:'Liberation Sans',sans-serif;">USD</span>
<div class="a" style="left:369.9px;top:466.59499999999997px;width:73.6px;height:17.6px;box-sizing:border-box;background:#e9fbdf;border:1px solid #b3ec98;border-radius:4.5px"></div>
<span class="t" style="left:375.70px;top:470.04px;font-size:9.75px;line-height:9.75px;font-weight:400;color:#25770f;font-family:'Liberation Sans',sans-serif;">Succeeded</span>
<svg class="a" style="left:427.2px;top:470.69499999999994px;" width="11" height="9" viewBox="0 0 11 9" fill="none"><path d="M0.9 4.6l3.2 3.2L10.2 1" stroke="#2e9413" stroke-width="1.5" stroke-linecap="round" stroke-linejoin="round"/></svg>
<svg class="a" style="left:462.9px;top:466.29499999999996px;" width="16.3" height="16.4" viewBox="0 0 16.3 16.4" fill="none"><rect width="16.3" height="16.4" rx="1.8" fill="#00d66f"/><path d="M6.1 4.5l4.9 3.8-4.9 3.8" stroke="#011e0f" stroke-width="2.3" stroke-linejoin="miter"/></svg>
<svg class="a" style="left:482.8px;top:466.29499999999996px;" width="16.2" height="16.4" viewBox="0 0 16.2 16.4" fill="none"><rect width="16.2" height="16.4" rx="1.8" fill="#0d4fa0"/><text x="8.1" y="10.6" text-anchor="middle" font-family="Liberation Sans" font-weight="700" font-style="italic" font-size="5.9" letter-spacing="-0.2" fill="#fff">VISA</text></svg>
<div class="a" style="left:505.9px;top:473.1449999999999px;width:2.9px;height:2.9px;background:#353a44;border-radius:50%"></div>
<div class="a" style="left:510.0px;top:473.1449999999999px;width:2.9px;height:2.9px;background:#353a44;border-radius:50%"></div>
<div class="a" style="left:514.1px;top:473.1449999999999px;width:2.9px;height:2.9px;background:#353a44;border-radius:50%"></div>
<div class="a" style="left:518.1999999999999px;top:473.1449999999999px;width:2.9px;height:2.9px;background:#353a44;border-radius:50%"></div>
<span class="t" style="left:524.70px;top:469.02px;font-size:11.375px;line-height:11.375px;font-weight:400;color:#353a44;font-family:'Liberation Sans',sans-serif;letter-spacing:-0.75px">4242</span>
<span class="t" style="left:567.90px;top:469.02px;font-size:11.375px;line-height:11.375px;font-weight:400;color:#5f6675;font-family:'Liberation Sans',sans-serif;">S00042</span>
<span class="t" style="left:761.00px;top:469.02px;font-size:11.375px;line-height:11.375px;font-weight:400;color:#5f6675;font-family:'Liberation Sans',sans-serif;">testemail@gmail.com</span>
<span class="t" style="left:963.40px;top:469.02px;font-size:11.375px;line-height:11.375px;font-weight:400;color:#5f6675;font-family:'Liberation Sans',sans-serif;">1 Dec, 09:15</span>
<div class="a" style="left:1053.3px;top:475.19499999999994px;width:11.3px;height:1px;background:#939cab"></div>
<div class="a" style="left:1141.3px;top:475.19499999999994px;width:11.1px;height:1px;background:#939cab"></div>
<div class="a" style="left:229.4px;top:490.14px;width:997px;height:1px;background:#ebeef1"></div>
<div class="a" style="left:233.3px;top:498.98499999999996px;width:13.3px;height:12.8px;box-sizing:border-box;border:1px solid #d5dbe1;border-radius:3.5px;background:#fff;box-shadow:0 1px 1px rgba(0,0,0,.05)"></div>
<span class="t" style="left:268.58px;top:500.02px;font-size:11.375px;line-height:11.375px;font-weight:700;color:#353a44;font-family:'Liberation Sans',sans-serif;">US$827.00</span>
<span class="t" style="left:335.90px;top:500.02px;font-size:11.375px;line-height:11.375px;font-weight:400;color:#646b7a;font-family:'Liberation Sans',sans-serif;">USD</span>
<div class="a" style="left:369.9px;top:496.885px;width:73.6px;height:17.6px;box-sizing:border-box;background:#e9fbdf;border:1px solid #b3ec98;border-radius:4.5px"></div>
<span class="t" style="left:375.70px;top:501.04px;font-size:9.75px;line-height:9.75px;font-weight:400;color:#25770f;font-family:'Liberation Sans',sans-serif;">Succeeded</span>
<svg class="a" style="left:427.2px;top:500.98499999999996px;" width="11" height="9" viewBox="0 0 11 9" fill="none"><path d="M0.9 4.6l3.2 3.2L10.2 1" stroke="#2e9413" stroke-width="1.5" stroke-linecap="round" stroke-linejoin="round"/></svg>
<svg class="a" style="left:462.9px;top:496.585px;" width="16.3" height="16.4" viewBox="0 0 16.3 16.4" fill="none"><rect width="16.3" height="16.4" rx="1.8" fill="#00d66f"/><path d="M6.1 4.5l4.9 3.8-4.9 3.8" stroke="#011e0f" stroke-width="2.3" stroke-linejoin="miter"/></svg>
<svg class="a" style="left:482.8px;top:496.585px;" width="16.2" height="16.4" viewBox="0 0 16.2 16.4" fill="none"><rect width="16.2" height="16.4" rx="1.8" fill="#0d4fa0"/><text x="8.1" y="10.6" text-anchor="middle" font-family="Liberation Sans" font-weight="700" font-style="italic" font-size="5.9" letter-spacing="-0.2" fill="#fff">VISA</text></svg>
<div class="a" style="left:505.9px;top:503.43499999999995px;width:2.9px;height:2.9px;background:#353a44;border-radius:50%"></div>
<div class="a" style="left:510.0px;top:503.43499999999995px;width:2.9px;height:2.9px;background:#353a44;border-radius:50%"></div>
<div class="a" style="left:514.1px;top:503.43499999999995px;width:2.9px;height:2.9px;background:#353a44;border-radius:50%"></div>
<div class="a" style="left:518.1999999999999px;top:503.43499999999995px;width:2.9px;height:2.9px;background:#353a44;border-radius:50%"></div>
<span class="t" style="left:524.70px;top:500.02px;font-size:11.375px;line-height:11.375px;font-weight:400;color:#353a44;font-family:'Liberation Sans',sans-serif;letter-spacing:-0.75px">4242</span>
<span class="t" style="left:567.90px;top:500.02px;font-size:11.375px;line-height:11.375px;font-weight:400;color:#5f6675;font-family:'Liberation Sans',sans-serif;">S00041</span>
<span class="t" style="left:761.00px;top:500.02px;font-size:11.375px;line-height:11.375px;font-weight:400;color:#5f6675;font-family:'Liberation Sans',sans-serif;">admin@yourcompany.example.com</span>
<span class="t" style="left:963.40px;top:500.02px;font-size:11.375px;line-height:11.375px;font-weight:400;color:#5f6675;font-family:'Liberation Sans',sans-serif;">1 Dec, 07:38</span>
<div class="a" style="left:1053.3px;top:505.48499999999996px;width:11.3px;height:1px;background:#939cab"></div>
<div class="a" style="left:1141.3px;top:505.48499999999996px;width:11.1px;height:1px;background:#939cab"></div>
<div class="a" style="left:229.4px;top:520.43px;width:997px;height:1px;background:#ebeef1"></div>
<div class="a" style="left:233.3px;top:529.275px;width:13.3px;height:12.8px;box-sizing:border-box;border:1px solid #d5dbe1;border-radius:3.5px;background:#fff;box-shadow:0 1px 1px rgba(0,0,0,.05)"></div>
<span class="t" style="left:268.58px;top:530.02px;font-size:11.375px;line-height:11.375px;font-weight:700;color:#353a44;font-family:'Liberation Sans',sans-serif;">US$589.00</span>
<span class="t" style="left:335.90px;top:530.02px;font-size:11.375px;line-height:11.375px;font-weight:400;color:#646b7a;font-family:'Liberation Sans',sans-serif;">USD</span>
<div class="a" style="left:369.9px;top:527.175px;width:73.6px;height:17.6px;box-sizing:border-box;background:#e9fbdf;border:1px solid #b3ec98;border-radius:4.5px"></div>
<span class="t" style="left:375.70px;top:531.04px;font-size:9.75px;line-height:9.75px;font-weight:400;color:#25770f;font-family:'Liberation Sans',sans-serif;">Succeeded</span>
<svg class="a" style="left:427.2px;top:531.275px;" width="11" height="9" viewBox="0 0 11 9" fill="none"><path d="M0.9 4.6l3.2 3.2L10.2 1" stroke="#2e9413" stroke-width="1.5" stroke-linecap="round" stroke-linejoin="round"/></svg>
<svg class="a" style="left:462.9px;top:526.8749999999999px;" width="16.2" height="16.4" viewBox="0 0 16.2 16.4" fill="none"><rect width="16.2" height="16.4" rx="1.8" fill="#0d4fa0"/><text x="8.1" y="10.6" text-anchor="middle" font-family="Liberation Sans" font-weight="700" font-style="italic" font-size="5.9" letter-spacing="-0.2" fill="#fff">VISA</text></svg>
<div class="a" style="left:486.4px;top:533.7249999999999px;width:2.9px;height:2.9px;background:#353a44;border-radius:50%"></div>
<div class="a" style="left:490.5px;top:533.7249999999999px;width:2.9px;height:2.9px;background:#353a44;border-radius:50%"></div>
<div class="a" style="left:494.59999999999997px;top:533.7249999999999px;width:2.9px;height:2.9px;background:#353a44;border-radius:50%"></div>
<div class="a" style="left:498.7px;top:533.7249999999999px;width:2.9px;height:2.9px;background:#353a44;border-radius:50%"></div>
<span class="t" style="left:505.20px;top:530.02px;font-size:11.375px;line-height:11.375px;font-weight:400;color:#353a44;font-family:'Liberation Sans',sans-serif;letter-spacing:-0.75px">4242</span>
<span class="t" style="left:568.30px;top:531.04px;font-size:10.65px;line-height:10.65px;font-weight:400;color:#5a6170;font-family:'Liberation Mono',monospace;">pi_3SZPuvRsw0VCGNFN1EQ3duai</span>
<span class="t" style="left:963.40px;top:530.02px;font-size:11.375px;line-height:11.375px;font-weight:400;color:#5f6675;font-family:'Liberation Sans',sans-serif;">1 Dec, 05:44</span>
<div class="a" style="left:1053.3px;top:535.775px;width:11.3px;height:1px;background:#939cab"></div>
<div class="a" style="left:1141.3px;top:535.775px;width:11.1px;height:1px;background:#939cab"></div>
<div class="a" style="left:229.4px;top:550.72px;width:997px;height:1px;background:#ebeef1"></div>
<div class="a" style="left:1188px;top:280px;width:11px;height:260px;background:linear-gradient(90deg,rgba(255,255,255,0),rgba(230,234,238,.4))"></div>
<div class="a" style="left:1199px;top:280px;width:28px;height:260px;background:#fff"></div>
<div class="a" style="left:1207.7px;top:322.645px;width:2.1px;height:2.1px;background:#687385;border-radius:50%"></div>
<div class="a" style="left:1211.6000000000001px;top:322.645px;width:2.1px;height:2.1px;background:#687385;border-radius:50%"></div>
<div class="a" style="left:1215.5px;top:322.645px;width:2.1px;height:2.1px;background:#687385;border-radius:50%"></div>
<div class="a" style="left:1207.7px;top:352.935px;width:2.1px;height:2.1px;background:#687385;border-radius:50%"></div>
<div class="a" style="left:1211.6000000000001px;top:352.935px;width:2.1px;height:2.1px;background:#687385;border-radius:50%"></div>
<div class="a" style="left:1215.5px;top:352.935px;width:2.1px;height:2.1px;background:#687385;border-radius:50%"></div>
<div class="a" style="left:1207.7px;top:383.225px;width:2.1px;height:2.1px;background:#687385;border-radius:50%"></div>
<div class="a" style="left:1211.6000000000001px;top:383.225px;width:2.1px;height:2.1px;background:#687385;border-radius:50%"></div>
<div class="a" style="left:1215.5px;top:383.225px;width:2.1px;height:2.1px;background:#687385;border-radius:50%"></div>
<div class="a" style="left:1207.7px;top:413.515px;width:2.1px;height:2.1px;background:#687385;border-radius:50%"></div>
<div class="a" style="left:1211.6000000000001px;top:413.515px;width:2.1px;height:2.1px;background:#687385;border-radius:50%"></div>
<div class="a" style="left:1215.5px;top:413.515px;width:2.1px;height:2.1px;background:#687385;border-radius:50%"></div>
<div class="a" style="left:1207.7px;top:443.805px;width:2.1px;height:2.1px;background:#687385;border-radius:50%"></div>
<div class="a" style="left:1211.6000000000001px;top:443.805px;width:2.1px;height:2.1px;background:#687385;border-radius:50%"></div>
<div class="a" style="left:1215.5px;top:443.805px;width:2.1px;height:2.1px;background:#687385;border-radius:50%"></div>
<div class="a" style="left:1207.7px;top:474.095px;width:2.1px;height:2.1px;background:#687385;border-radius:50%"></div>
<div class="a" style="left:1211.6000000000001px;top:474.095px;width:2.1px;height:2.1px;background:#687385;border-radius:50%"></div>
<div class="a" style="left:1215.5px;top:474.095px;width:2.1px;height:2.1px;background:#687385;border-radius:50%"></div>
<div class="a" style="left:1207.7px;top:504.385px;width:2.1px;height:2.1px;background:#687385;border-radius:50%"></div>
<div class="a" style="left:1211.6000000000001px;top:504.385px;width:2.1px;height:2.1px;background:#687385;border-radius:50%"></div>
<div class="a" style="left:1215.5px;top:504.385px;width:2.1px;height:2.1px;background:#687385;border-radius:50%"></div>
<div class="a" style="left:1207.7px;top:534.675px;width:2.1px;height:2.1px;background:#687385;border-radius:50%"></div>
<div class="a" style="left:1211.6000000000001px;top:534.675px;width:2.1px;height:2.1px;background:#687385;border-radius:50%"></div>
<div class="a" style="left:1215.5px;top:534.675px;width:2.1px;height:2.1px;background:#687385;border-radius:50%"></div>
<div class="a" style="left:1199px;top:308.4px;width:28px;height:1px;background:#ebeef1"></div>
<div class="a" style="left:1199px;top:338.69px;width:28px;height:1px;background:#ebeef1"></div>
<div class="a" style="left:1199px;top:368.97999999999996px;width:28px;height:1px;background:#ebeef1"></div>
<div class="a" style="left:1199px;top:399.27px;width:28px;height:1px;background:#ebeef1"></div>
<div class="a" style="left:1199px;top:429.55999999999995px;width:28px;height:1px;background:#ebeef1"></div>
<div class="a" style="left:1199px;top:459.84999999999997px;width:28px;height:1px;background:#ebeef1"></div>
<div class="a" style="left:1199px;top:490.14px;width:28px;height:1px;background:#ebeef1"></div>
<div class="a" style="left:1199px;top:520.43px;width:28px;height:1px;background:#ebeef1"></div>
<div class="a" style="left:1199px;top:550.72px;width:28px;height:1px;background:#ebeef1"></div></div>
<div class="a" style="left:197px;top:540px;width:1061px;height:27px;background:#fff"></div>
<div class="a" style="left:229.5px;top:539.5px;width:997.5px;height:1px;background:#f0f2f4"></div>
<span class="t" style="left:230px;top:550.5px;font-size:11.2px;line-height:11.2px;color:#596171;font-family:'Liberation Sans',sans-serif">Viewing <b style="color:#353a44">1–20</b> of <b style="color:#353a44">614</b> results</span>
<div class="a" style="left:1130.4px;top:546.1px;width:55.2px;height:20.8px;box-sizing:border-box;border:1px solid #e3e7ec;border-radius:5px"></div>
<span class="t" style="left:1137.60px;top:551.04px;font-size:9.75px;line-height:9.75px;font-weight:700;color:#a3acba;font-family:'Liberation Sans',sans-serif;">Previous</span>
<div class="a" style="left:1191.3px;top:546.1px;width:35.3px;height:20.8px;box-sizing:border-box;border:1px solid #d8dee4;border-radius:5px;box-shadow:0 1px 1px rgba(0,0,0,.05)"></div>
<span class="t" style="left:1198.80px;top:551.04px;font-size:9.75px;line-height:9.75px;font-weight:700;color:#353a44;font-family:'Liberation Sans',sans-serif;">Next</span>
<div class="a" style="left:206px;top:301.5px;width:1035.7px;height:35.2px;box-sizing:border-box;border:3px solid #ff0000;border-radius:1.5px"></div>
<div class="a" style="left:202.5px;top:317px;width:1.6px;height:11.4px;background:#687385;border-radius:1px"></div>
</body></html>
